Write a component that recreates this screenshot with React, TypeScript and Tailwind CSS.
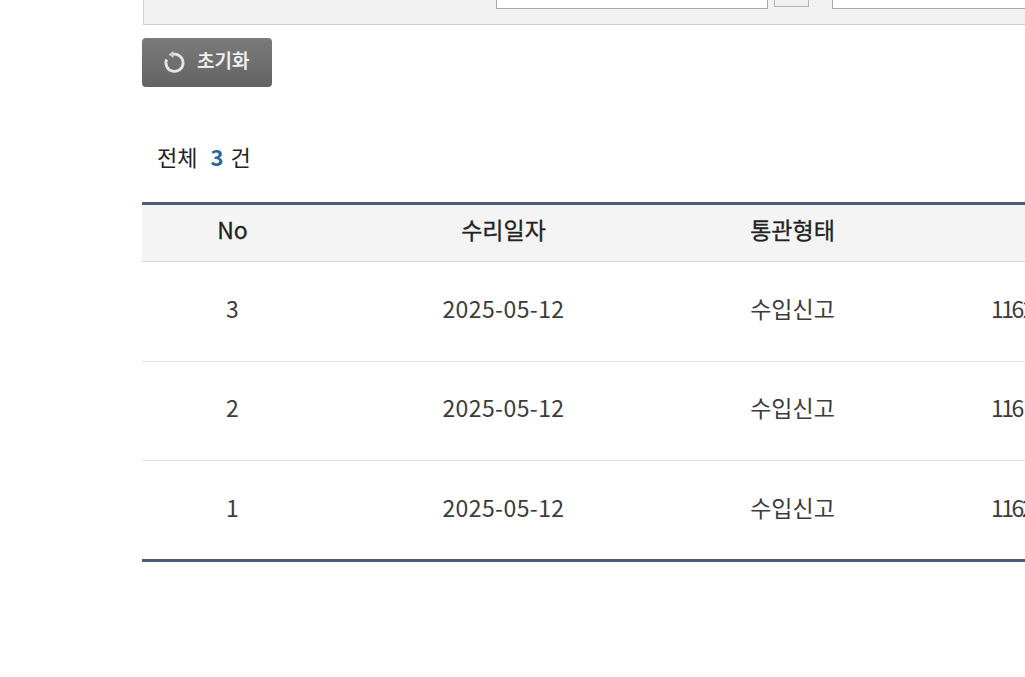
const font = "font-['Noto_Sans_CJK_KR','Noto_Sans',sans-serif]"

const rows = [
  { no: 3, date: '2025-05-12', type: '수입신고', num: '2-25-000123', height: 'h-[99.5px] pb-[7px]', gap: 'ml-[1px]' },
  { no: 2, date: '2025-05-12', type: '수입신고', num: '2-25-000118', height: 'h-[99.5px] pb-[7px]', gap: 'ml-[4px]' },
  { no: 1, date: '2025-05-12', type: '수입신고', num: '2-25-000107', height: 'h-[98px] pb-[5px]', gap: 'ml-0' },
]

export default function App() {
  return (
    <div className={`${font} h-[677px] w-[1025px] overflow-hidden bg-white pl-[142px]`}>
      {/* Search panel */}
      <div className="ml-[1px] flex h-[25px] w-[1000px] items-start border-b border-l border-[#d0d0d0] bg-[#f2f2f2] pl-[352px]">
        <div className="h-[9px] w-[272px] border-x border-b border-[#a8a8a8] bg-white" />
        <div className="ml-[6px] h-[7px] w-[35px] border-x border-b border-[#b4b4b4] bg-[#f0f0f0]" />
        <div className="ml-[23px] h-[9px] w-[300px] border-x border-b border-[#a8a8a8] bg-white" />
      </div>

      {/* Reset */}
      <button className="mt-[13px] flex h-[49px] w-[130px] items-center rounded-[4px] bg-gradient-to-b from-[#7b7b7b] to-[#636363] pb-[5px] pl-[21px] text-[19px] font-medium text-[#f4f4f4] [-webkit-text-stroke:0.2px_#f4f4f4]">
        <svg width="24" height="24" viewBox="0 0 24 24" fill="none" className="mt-[3px] mr-[10px]">
          <path d="M9.6 4.4a8.6 8.6 0 1 1-6 5" stroke="#e4e4e4" strokeWidth="2.8" fill="none" />
          <path d="M10.5 1v7l-5-3.6z" fill="#d0d0d0" />
        </svg>
        초기화
      </button>

      {/* Count */}
      <div className="mt-[54px] flex h-[34px] items-center pb-[5px] pl-[15px] text-[22px] leading-none text-[#222222]">
        <span>전체</span>
        <span className="ml-[13px] font-bold text-[#2a66a5]">3</span>
        <span className="ml-[7px]">건</span>
      </div>

      {/* Table */}
      <div className="mt-[27px] w-[1100px] border-y-[3px] border-[#4e5a7c]">
        <div className="grid h-[57px] grid-cols-[181px_361px_217px_1fr] items-center border-b border-[#d4d4d4] bg-[#f4f4f4] pb-[7px] text-center text-[23px] text-[#222222] [-webkit-text-stroke:0.3px_#222222]">
          <div>No</div>
          <div>수리일자</div>
          <div>통관형태</div>
          <div />
        </div>
        {rows.map((row, i) => (
          <div
            key={row.no}
            className={`grid ${row.height} grid-cols-[181px_361px_217px_1fr] items-center text-center text-[23px] text-[#3c3c3c] ${i < 2 ? 'border-b border-[#e4e4e4]' : ''}`}
          >
            <div>{row.no}</div>
            <div className="tracking-[0.4px]">{row.date}</div>
            <div>{row.type}</div>
            <div className="pl-[90px] text-left whitespace-nowrap">
              <span className="tracking-[-2.5px]">116</span>
              <span className={row.gap}>{row.num}</span>
            </div>
          </div>
        ))}
      </div>
    </div>
  )
}
